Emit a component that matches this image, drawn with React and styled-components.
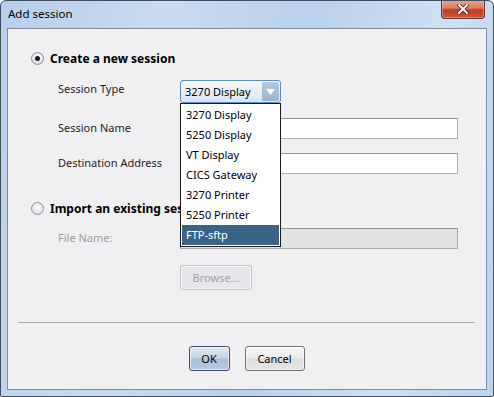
import React, { useState } from 'react';
import styled, { createGlobalStyle } from 'styled-components';

const GlobalStyle = createGlobalStyle`
  html, body {
    margin: 0;
    padding: 0;
    background: #ffffff;
  }
  body {
    font-family: "Noto Sans", "Open Sans", "DejaVu Sans", sans-serif;
    font-size: 11px;
  }
`;

const Window = styled.div`
  width: 494px;
  height: 397px;
  box-sizing: border-box;
  display: flex;
  flex-direction: column;
  border: 1px solid #3e4c5c;
  border-radius: 6px 6px 2px 2px;
  background: linear-gradient(100deg, #b7cfea 0%, #c9dcf1 30%, #b9d1ec 55%, #cfe0f3 80%, #bcd3ee 100%);
  overflow: hidden;
`;

const TitleBar = styled.div`
  height: 27px;
  display: flex;
  align-items: flex-start;
  justify-content: space-between;
  padding: 0 8px 0 7px;
`;

const Title = styled.div`
  margin-top: 5px;
  font-size: 11.5px;
  color: #000;
`;

const CloseButton = styled.button`
  width: 44px;
  height: 19px;
  margin-top: -1px;
  border: 1px solid #6b2a22;
  border-top: none;
  border-radius: 0 0 4px 4px;
  background: linear-gradient(180deg, #e6a898 0%, #d77a68 45%, #c23b27 55%, #c9553f 100%);
  display: flex;
  align-items: center;
  justify-content: center;
  padding: 0;
  box-shadow: inset 0 0 0 1px rgba(255, 200, 190, 0.5);
`;

const Client = styled.div`
  flex: 1;
  margin: 0 6px 6px 6px;
  border: 1px solid #7f8d9c;
  background: #f0f0f2;
  padding: 21px 10px 0 23px;
  display: flex;
  flex-direction: column;
`;

const RadioRow = styled.label`
  display: flex;
  align-items: center;
  gap: 6px;
  height: 16px;
  font-weight: 700;
  font-size: 12px;
  color: #000;
  margin-top: ${({ $top }) => $top || 0}px;
`;

const Radio = styled.span`
  width: 11px;
  height: 11px;
  border-radius: 50%;
  border: 1px solid #8b8f95;
  background: radial-gradient(circle at 50% 40%, #ffffff 0%, #e4e6ea 60%, #c9ccd2 100%);
  display: flex;
  align-items: center;
  justify-content: center;
  flex-shrink: 0;

  &::after {
    content: '';
    width: 5px;
    height: 5px;
    border-radius: 50%;
    background: #1a1a1a;
    display: ${({ $checked }) => ($checked ? 'block' : 'none')};
  }
`;

const FieldRow = styled.div`
  display: flex;
  align-items: flex-start;
  margin-left: 27px;
  margin-top: ${({ $top }) => $top}px;
`;

const Label = styled.div`
  width: 122px;
  flex-shrink: 0;
  color: ${({ $disabled }) => ($disabled ? '#9c9c9c' : '#1e1e1e')};
  padding-top: ${({ $pad }) => $pad || 2}px;
`;

const TextInput = styled.div`
  width: 278px;
  height: 21px;
  box-sizing: border-box;
  border: 1px solid #abadb3;
  border-top-color: #8e9197;
  background: ${({ $disabled }) => ($disabled ? '#e2e2e2' : '#ffffff')};
`;

const SelectWrap = styled.div`
  position: relative;
  width: 101px;
`;

const SelectBox = styled.div`
  height: 23px;
  box-sizing: border-box;
  border: 1px solid #5a8bbf;
  border-radius: 3px;
  background: linear-gradient(180deg, #f4f8fc 0%, #e6eef6 50%, #d9e5f1 100%);
  display: flex;
  align-items: center;
  justify-content: space-between;
  padding-left: 4px;
  color: #000;
`;

const Arrow = styled.span`
  width: 17px;
  height: 19px;
  margin-right: 1px;
  border-radius: 0 2px 2px 0;
  background: linear-gradient(180deg, #b7c9dd 0%, #9fb4cd 100%);
  display: flex;
  align-items: center;
  justify-content: center;
`;

const List = styled.ul`
  position: absolute;
  left: 0;
  top: 23px;
  width: 101px;
  box-sizing: border-box;
  margin: 0;
  padding: 1px 0 1px;
  list-style: none;
  background: #ffffff;
  border: 1px solid #1a1a1a;
  z-index: 5;
`;

const Item = styled.li`
  height: 20px;
  line-height: 20px;
  padding-left: 4px;
  margin: 0 1px;
  color: ${({ $selected }) => ($selected ? '#ffffff' : '#000000')};
  background: ${({ $selected }) => ($selected ? '#3a6386' : 'transparent')};
`;

const Button = styled.button`
  height: 25px;
  box-sizing: border-box;
  width: ${({ $w }) => $w}px;
  border-radius: 3px;
  font-family: inherit;
  font-size: 11px;
  padding: 0;
  border: 1px solid ${({ $primary, disabled }) => (disabled ? '#c2c5ca' : $primary ? '#3c4f66' : '#707070')};
  color: ${({ disabled }) => (disabled ? '#a3a3a3' : '#000')};
  background: ${({ $primary, disabled }) =>
    disabled
      ? '#e6e7ea'
      : $primary
      ? 'linear-gradient(180deg, #dfe9f3 0%, #c3d3e4 48%, #aabfd6 52%, #b8cbe0 100%)'
      : 'linear-gradient(180deg, #f6f6f6 0%, #ebebeb 48%, #dddddd 52%, #e6e6e6 100%)'};
  box-shadow: inset 0 0 0 1px rgba(255, 255, 255, 0.6);
`;

const BrowseRow = styled.div`
  margin-left: 149px;
  margin-top: 16px;
`;

const Separator = styled.div`
  height: 1px;
  background: #a9abae;
  margin: 32px 0 0 -13px;
  width: 457px;
`;

const ButtonRow = styled.div`
  display: flex;
  justify-content: center;
  gap: 15px;
  margin: 23px 0 0 -23px;
  width: 477px;
`;

const options = ['3270 Display', '5250 Display', 'VT Display', 'CICS Gateway', '3270 Printer', '5250 Printer', 'FTP-sftp'];

export default function App() {
  const [selected] = useState('FTP-sftp');

  return (
    <>
      <GlobalStyle />
      <Window>
        <TitleBar>
          <Title>Add session</Title>
          <CloseButton aria-label="Close">
            <svg width="12" height="10" viewBox="0 0 12 10">
              <path d="M2 1 L10 9 M10 1 L2 9" stroke="#5a1e16" strokeWidth="3.6" strokeLinecap="square" />
              <path d="M2 1 L10 9 M10 1 L2 9" stroke="#ffffff" strokeWidth="2" strokeLinecap="square" />
            </svg>
          </CloseButton>
        </TitleBar>

        <Client>
          <RadioRow>
            <Radio $checked />
            Create a new session
          </RadioRow>

          <FieldRow $top={14}>
            <Label $pad={1}>Session Type</Label>
            <SelectWrap>
              <SelectBox>
                3270 Display
                <Arrow>
                  <svg width="9" height="6" viewBox="0 0 9 6">
                    <path d="M0 0 H9 L4.5 6 Z" fill="#ffffff" />
                  </svg>
                </Arrow>
              </SelectBox>
              <List>
                {options.map((o) => (
                  <Item key={o} $selected={o === selected}>{o}</Item>
                ))}
              </List>
            </SelectWrap>
          </FieldRow>

          <FieldRow $top={15}>
            <Label>Session Name</Label>
            <TextInput />
          </FieldRow>

          <FieldRow $top={14}>
            <Label>Destination Address</Label>
            <TextInput />
          </FieldRow>

          <RadioRow $top={26}>
            <Radio />
            Import an existing session
          </RadioRow>

          <FieldRow $top={12}>
            <Label $disabled>File Name:</Label>
            <TextInput $disabled />
          </FieldRow>

          <BrowseRow>
            <Button $w={72} disabled>Browse...</Button>
          </BrowseRow>

          <Separator />

          <ButtonRow>
            <Button $w={41} $primary>OK</Button>
            <Button $w={60}>Cancel</Button>
          </ButtonRow>
        </Client>
      </Window>
    </>
  );
}
